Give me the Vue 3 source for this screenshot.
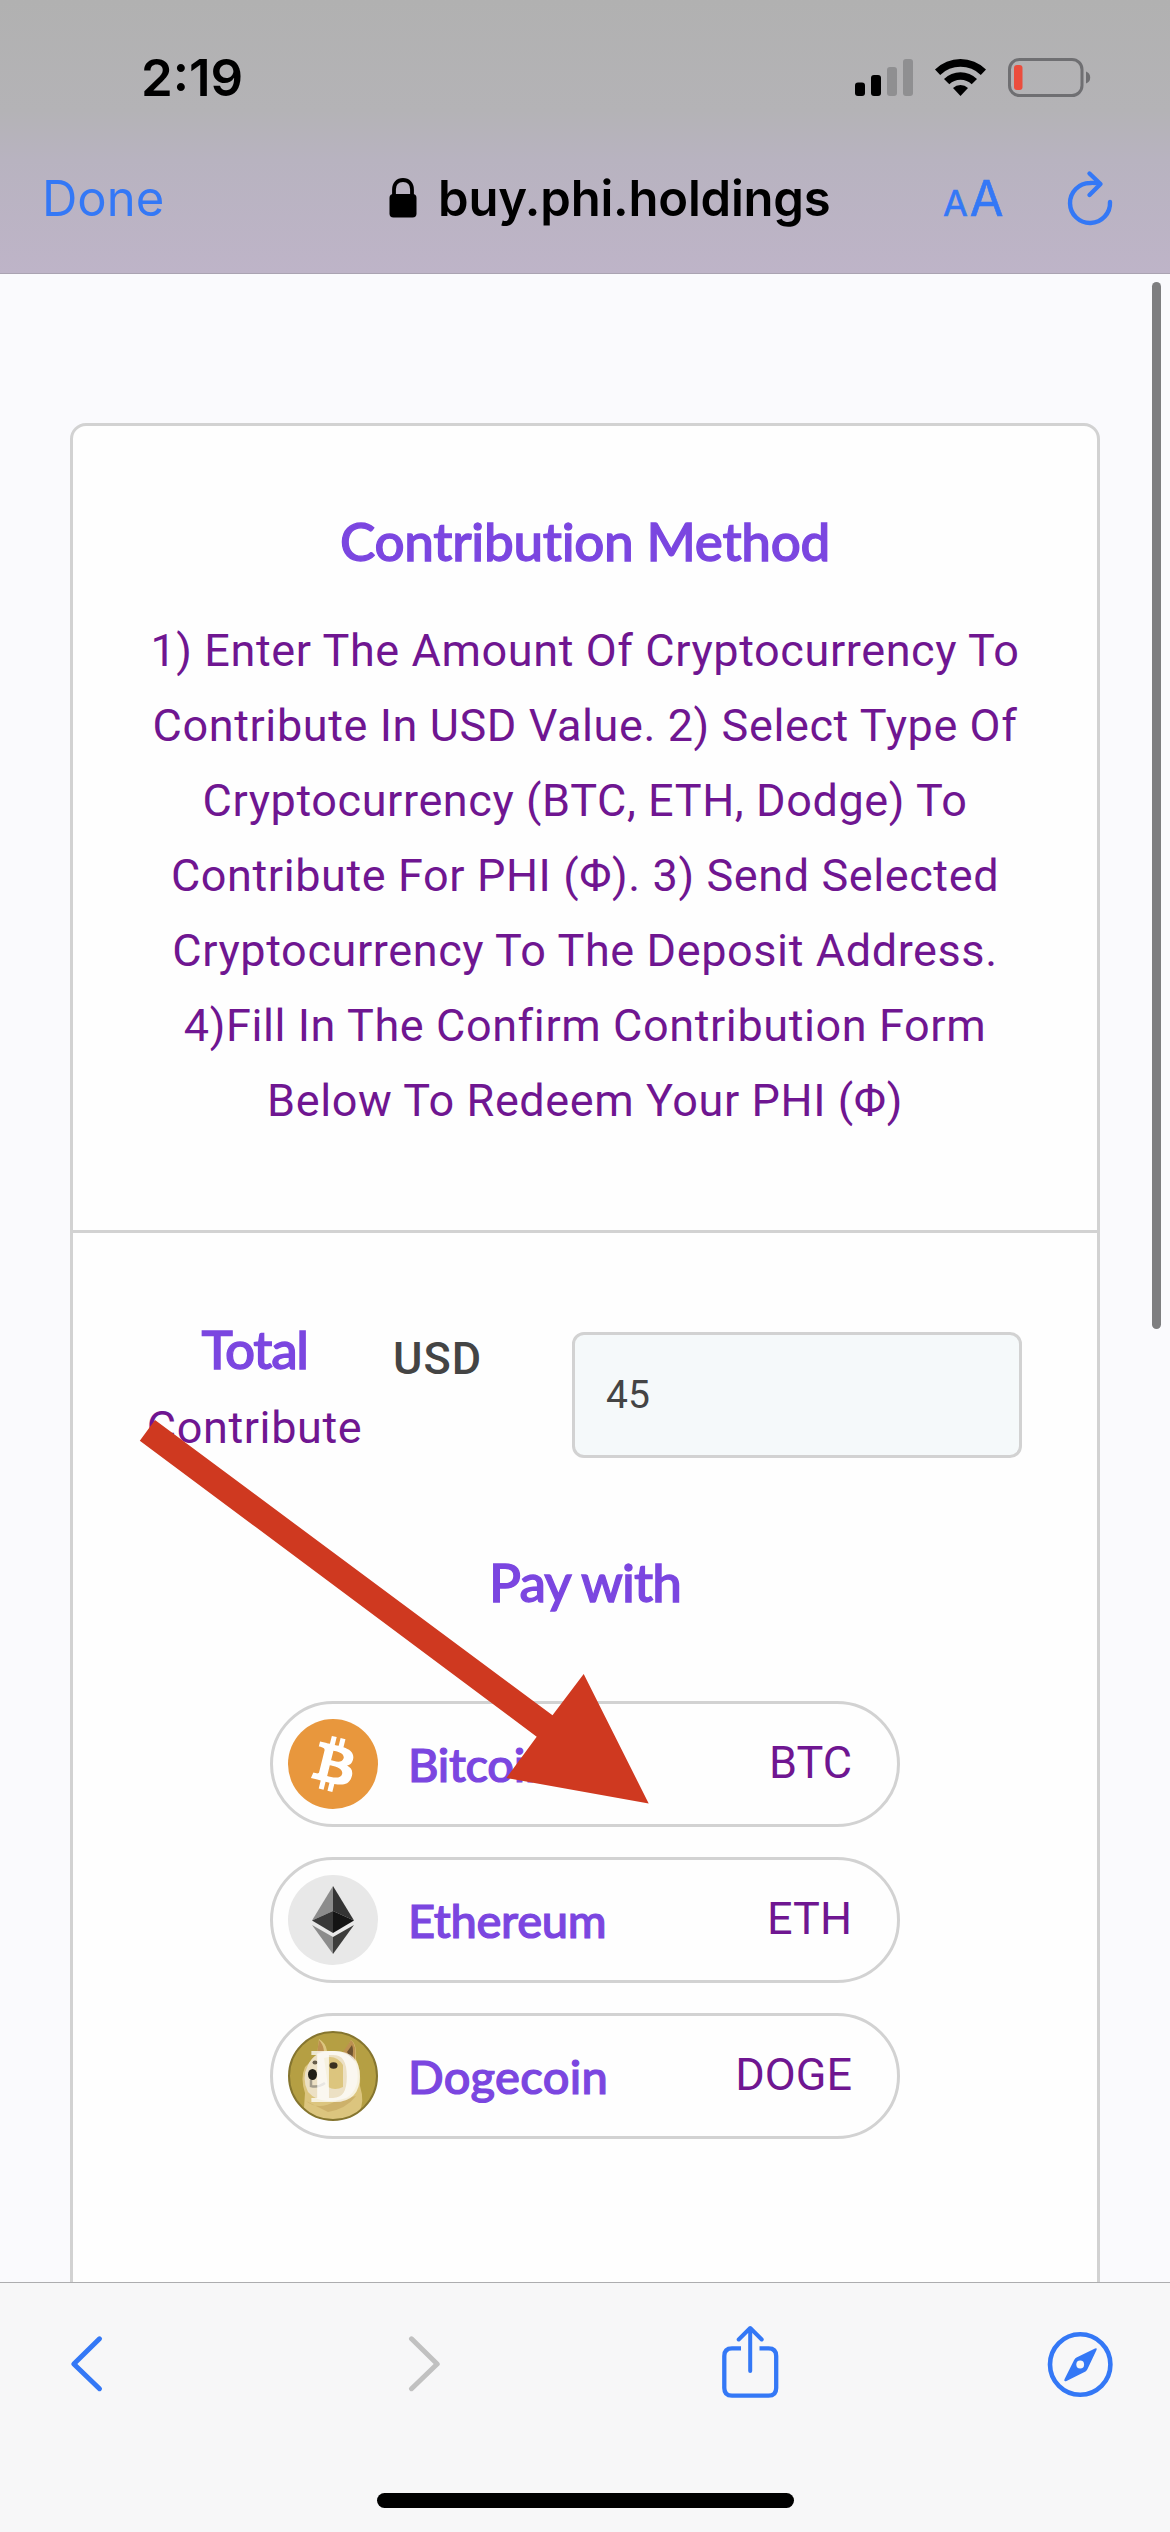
<script setup>
const coins = [
  { id: 'btc', name: 'Bitcoin', code: 'BTC' },
  { id: 'eth', name: 'Ethereum', code: 'ETH' },
  { id: 'doge', name: 'Dogecoin', code: 'DOGE' },
]
const steps = [
  '1) Enter The Amount Of Cryptocurrency To',
  'Contribute In USD Value. 2) Select Type Of',
  'Cryptocurrency (BTC, ETH, Dodge) To',
  'Contribute For PHI (Φ). 3) Send Selected',
  'Cryptocurrency To The Deposit Address.',
  '4)Fill In The Confirm Contribution Form',
  'Below To Redeem Your PHI (Φ)',
]
</script>

<template>
  <div class="screen">
    <header class="top">
      <div class="status">
        <span class="time">2:19</span>
        <svg class="indicators" width="236" height="40" viewBox="0 0 236 40">
          <rect x="0" y="24.500" width="10" height="13.500" rx="3" />
          <rect x="16" y="17" width="10" height="21" rx="3" />
          <rect x="32" y="9" width="10" height="29" rx="3" fill="#8f8f91" />
          <rect x="48" y="1" width="10" height="37" rx="3" fill="#8f8f91" />
          <path d="M80 11.500a36.500 36.500 0 0 1 51 0l-5.200 5.500a29 29 0 0 0-40.600 0zM89 21a23.500 23.500 0 0 1 33 0l-5.300 5.300a16 16 0 0 0-22.400 0zM98 30a10.700 10.700 0 0 1 15 0l-7.500 8z" />
          <rect x="154.500" y="1.500" width="72.500" height="36" rx="10" fill="none" stroke="#6f6f72" stroke-width="3" />
          <rect x="159" y="7" width="8.500" height="25" rx="3" fill="#eb4d3d" />
          <path d="M231 13.500q4.200 1.500 4.200 6t-4.200 6z" fill="#6f6f72" />
        </svg>
      </div>
      <nav class="address">
        <span class="done">Done</span>
        <span class="url">
          <svg width="28" height="40" viewBox="0 0 28 40">
            <rect x="0.500" y="16" width="27" height="23.500" rx="4" />
            <path d="M5 18V11.500C5 5.500 8.500 2 14 2s9 3.500 9 9.500V18" fill="none" stroke="#000" stroke-width="3.800" />
          </svg>
          <b>buy.phi.holdings</b>
        </span>
        <span class="size"><small>A</small>A</span>
        <svg class="reload" width="48" height="58" viewBox="0 0 48 58" fill="none" stroke="#3478f6" stroke-width="4.400" stroke-linecap="round" stroke-linejoin="round">
          <path d="M44 32A20 20 0 1 1 24 13Q29 12.500 34 14M23.500 3.500 34.500 14 23.500 25" />
        </svg>
      </nav>
    </header>

    <main class="page">
      <i class="scrollbar"></i>
      <section class="card">
        <div class="intro">
          <h1 class="heading">Contribution Method</h1>
          <p><span v-for="(s, i) in steps" :key="i" class="line">{{ s }}</span></p>
        </div>
        <div class="form">
          <div class="amount">
            <div class="label">
              <h2 class="heading total">Total</h2>
              <span class="line">Contribute</span>
            </div>
            <span class="usd">USD</span>
            <div class="field">45</div>
          </div>
          <h2 class="heading pay">Pay with</h2>
          <ul class="coins">
            <li v-for="c in coins" :key="c.id">
              <svg v-if="c.id === 'btc'" width="90" height="90" viewBox="0 0 32 32">
                <circle cx="16" cy="16" r="16" fill="#e8973d" />
                <path fill="#fff" fill-rule="evenodd" d="M23.189 14.02c.314-2.096-1.283-3.223-3.465-3.975l.708-2.84-1.728-.43-.69 2.765c-.454-.114-.92-.22-1.385-.326l.695-2.783L15.596 6l-.708 2.839c-.376-.086-.746-.17-1.104-.26l.002-.009-2.384-.595-.46 1.846s1.283.294 1.256.312c.7.175.826.638.805 1.006l-.806 3.235c.048.012.11.03.18.057l-.183-.045-1.13 4.532c-.086.212-.303.531-.793.41.018.025-1.256-.313-1.256-.313l-.858 1.978 2.25.561c.418.105.828.215 1.231.318l-.715 2.872 1.727.43.708-2.84c.472.127.93.245 1.378.357l-.706 2.828 1.728.43.715-2.866c2.948.558 5.164.333 6.097-2.333.752-2.146-.037-3.385-1.588-4.192 1.13-.26 1.98-1.003 2.207-2.538zm-3.95 5.538c-.533 2.147-4.148.986-5.32.695l.95-3.805c1.172.293 4.929.872 4.37 3.11zm.535-5.569c-.487 1.953-3.495.96-4.47.717l.86-3.45c.975.243 4.118.696 3.61 2.733z" />
              </svg>
              <svg v-else-if="c.id === 'eth'" width="90" height="90" viewBox="0 0 90 90">
                <circle cx="45" cy="45" r="45" fill="#e8e8e8" />
                <path d="M45 11 24 45.500 45 36z" fill="#8c8c8c" />
                <path d="M45 11 66 45.500 45 36z" fill="#343434" />
                <path d="M24 45.500 45 36V58z" fill="#393939" />
                <path d="M66 45.500 45 36V58z" fill="#141414" />
                <path d="M24 50 45 62V79z" fill="#8c8c8c" />
                <path d="M66 50 45 62V79z" fill="#3c3c3b" />
              </svg>
              <svg v-else width="90" height="90" viewBox="0 0 90 90">
                <circle cx="45" cy="45" r="44" fill="#b59f43" />
                <path d="M29 24 31 8q7 4 8 12L56 22 63 9q6 4 5 19 5 10 4 27 5 16-1 26-10 8-26 8-17 0-29-12l1-15q-5-15 0-26z" fill="#dcc57e" />
                <path d="M29 22 31 9q4 4 5 11zM55 21l8-12q6 5 4 20l-5 6z" fill="#bd9150" />
                <path d="M59 21l5-7q2 5 0 15z" fill="#6f5330" />
                <path d="M20 34q6-13 21-14 20-1 27 13 6 25-10 34-26 8-38-6-7-14 0-27z" fill="#ece0c4" />
                <path d="M36 27q12-4 19 7v22q-8 4-15 0z" fill="#dcc57e" />
                <path d="M18 70q12 10 30 0l20-5q-10 13-28 16z" fill="#cdb16a" />
                <ellipse cx="24.500" cy="43.500" rx="4.500" ry="5.500" fill="#211f18" />
                <ellipse cx="27" cy="31.500" rx="2.500" ry="2" fill="#675d4b" />
                <path d="M23 49v6q7 2 14-3" fill="none" stroke="#a39c8c" stroke-width="2.500" />
                <text x="20.500" y="71" font-family="DejaVu Serif" font-weight="700" font-size="70" textLength="54" lengthAdjust="spacingAndGlyphs" fill="#fff" fill-opacity=".75">D</text>
                <ellipse cx="45.500" cy="34.500" rx="4" ry="3.300" fill="#39301f" />
                <circle cx="45" cy="45" r="44" fill="none" stroke="#85752f" stroke-width="2" />
              </svg>
              <strong :class="c.id">{{ c.name }}</strong>
              <span class="code">{{ c.code }}</span>
            </li>
          </ul>
        </div>
      </section>
      <svg class="pointer" width="510" height="385" viewBox="139 1419 510 385">
        <path d="M155 1420 552.500 1715.300 583.700 1674 648.700 1803.500 506.400 1778 536.700 1736.700 139.800 1440.700z" fill="#cf3920" />
      </svg>
    </main>

    <footer class="bottom">
      <div class="tools">
        <svg class="back" width="34" height="78" viewBox="70 2325 34 78" fill="none" stroke="#3478f6" stroke-width="5" stroke-linecap="round" stroke-linejoin="round"><path d="M99.500 2338.800 73.800 2364l25.700 24.700" /></svg>
        <svg class="forward" width="34" height="78" viewBox="408 2325 34 78" fill="none" stroke="#c1c1c1" stroke-width="5" stroke-linecap="round" stroke-linejoin="round"><path d="M411.500 2338.800 437.200 2364l-25.700 24.700" /></svg>
        <svg class="share" width="60" height="78" viewBox="720 2325 60 78" fill="none" stroke="#3478f6" stroke-width="4.300">
          <path d="M741 2348.300h-9q-7.700 0-7.700 7.700v32q0 7.700 7.700 7.700h36.500q7.700 0 7.700-7.700v-32q0-7.700-7.700-7.700h-9" />
          <path d="M750.200 2371V2328.500M738.700 2339.500l11.500-11.500 11.500 11.500" stroke-linecap="round" stroke-linejoin="round" stroke-width="4" />
        </svg>
        <svg width="68" height="78" viewBox="1046 2325 68 78">
          <circle cx="1080.200" cy="2364.500" r="30.200" fill="none" stroke="#3478f6" stroke-width="4.600" />
          <path d="M1095 2348.500q2.500-1 1.500 1.500l-9 19q-.5 1.500-2 2.400l-19 9.600q-3 1-2-1.800l9.500-19q1-2 2.500-2.800z" fill="#3478f6" />
          <circle cx="1080.200" cy="2364.500" r="3.900" fill="#f7f7f8" />
        </svg>
      </div>
      <i class="home"></i>
    </footer>
  </div>
</template>

<style>
body { margin: 0; }
</style>

<style scoped>
* { box-sizing: border-box; }
svg { display: block; flex: none; }
.screen {
  width: 1170px; height: 2532px; display: flex; flex-direction: column;
  overflow: hidden; background: #fafafd; font-family: Roboto, sans-serif;
}
.top {
  height: 274px; flex: none; display: flex; flex-direction: column; font-family: Inter, sans-serif;
  background: linear-gradient(#b1b1b1 0, #b4b3b6 110px, #b8b3c0 160px, #beb4c8 273px);
  border-bottom: 1px solid #aaa3b2;
}
.status { height: 134px; display: flex; justify-content: space-between; padding: 58px 79px 0 141px; }
.time { font-size: 51px; font-weight: 600; line-height: 60px; height: 60px; margin-top: -10px; letter-spacing: 0; }
.address { height: 139px; display: flex; align-items: flex-start; padding: 34px 56px 0 42px; color: #3478f6; }
.done { font-size: 49px; line-height: 62px; width: 347px; }
.url { display: flex; gap: 21px; color: #000; width: 554px; }
.url svg { margin-top: 10px; }
.url b { font-size: 49px; line-height: 61px; font-weight: 600; letter-spacing: -0.200px; white-space: nowrap; }
.size { font-size: 49px; line-height: 62px; width: 123px; white-space: nowrap; -webkit-text-stroke: 0.600px #3478f6; }
.size small { font-size: 36px; margin-right: 2px; }
.reload { margin-top: 2px; }
.page { position: relative; flex: 1; min-height: 0; padding: 149px 70px 0; overflow: hidden; }
.scrollbar { position: absolute; left: 1152px; top: 8px; width: 9px; height: 1047px; border-radius: 5px; background: #7e7e80; }
.card { height: 2000px; border: 3px solid #d2d2d2; border-radius: 16px; background: #fefefe; }
.heading { margin: 0; font: 500 53px/66px Lato, sans-serif; height: 64px; color: #7b46e0; text-align: center; white-space: nowrap; -webkit-text-stroke: 1.300px #7b46e0; }
.intro { height: 807px; padding-top: 82px; border-bottom: 3px solid #d2d2d2; }
.intro .heading { letter-spacing: -0.300px; }
.intro p { margin: 41px 0 0; display: flex; flex-direction: column; align-items: center; }
.line { display: block; font-size: 45px; line-height: 75px; letter-spacing: 0.600px; color: #6f1691; white-space: nowrap; }
.form { padding: 83px 75px 0; }
.amount { display: flex; align-items: flex-start; height: 149px; }
.label { width: 213px; display: flex; flex-direction: column; align-items: center; }
.label .line { margin-top: 10px; }
.total { letter-spacing: -1.400px; }
.usd { font-size: 45px; font-weight: 500; line-height: 75px; letter-spacing: 1px; color: #444; margin: 5px 0 0 32px; width: 179px; }
.field { width: 450px; height: 126px; margin-top: 16px; border: 3px solid #d2d2d2; border-radius: 12px; background: #f5f9fa; color: #444; font-size: 39px; line-height: 121px; padding-left: 31px; }
.pay { margin-top: 84px; letter-spacing: -0.900px; }
.coins { list-style: none; margin: 88px auto 0; padding: 0; width: 630px; display: flex; flex-direction: column; gap: 30px; }
.coins li { height: 126px; border: 3px solid #d2d2d2; border-radius: 63px; display: flex; align-items: center; padding: 0 45px 0 15px; }
.coins strong { font: 500 47px/58px Lato, sans-serif; color: #7b46e0; margin: -1px auto 0 30px; letter-spacing: -0.300px; -webkit-text-stroke: 1.200px #7b46e0; }
.coins .doge { letter-spacing: 0.300px; }
.code { font-size: 45px; line-height: 75px; margin-bottom: 3px; color: #6f1691; }
.pointer { position: absolute; left: 139px; top: 1145px; }
.bottom { height: 250px; flex: none; background: #f7f7f8; border-top: 1px solid #adadaf; }
.tools { display: flex; padding: 42px 56px 0 70px; }
.back { margin-right: 304px; }
.forward { margin-right: 278px; }
.share { margin-right: 266px; }
.home { display: block; width: 417px; height: 15px; border-radius: 8px; background: #000; margin: 90px auto 0; }
</style>
